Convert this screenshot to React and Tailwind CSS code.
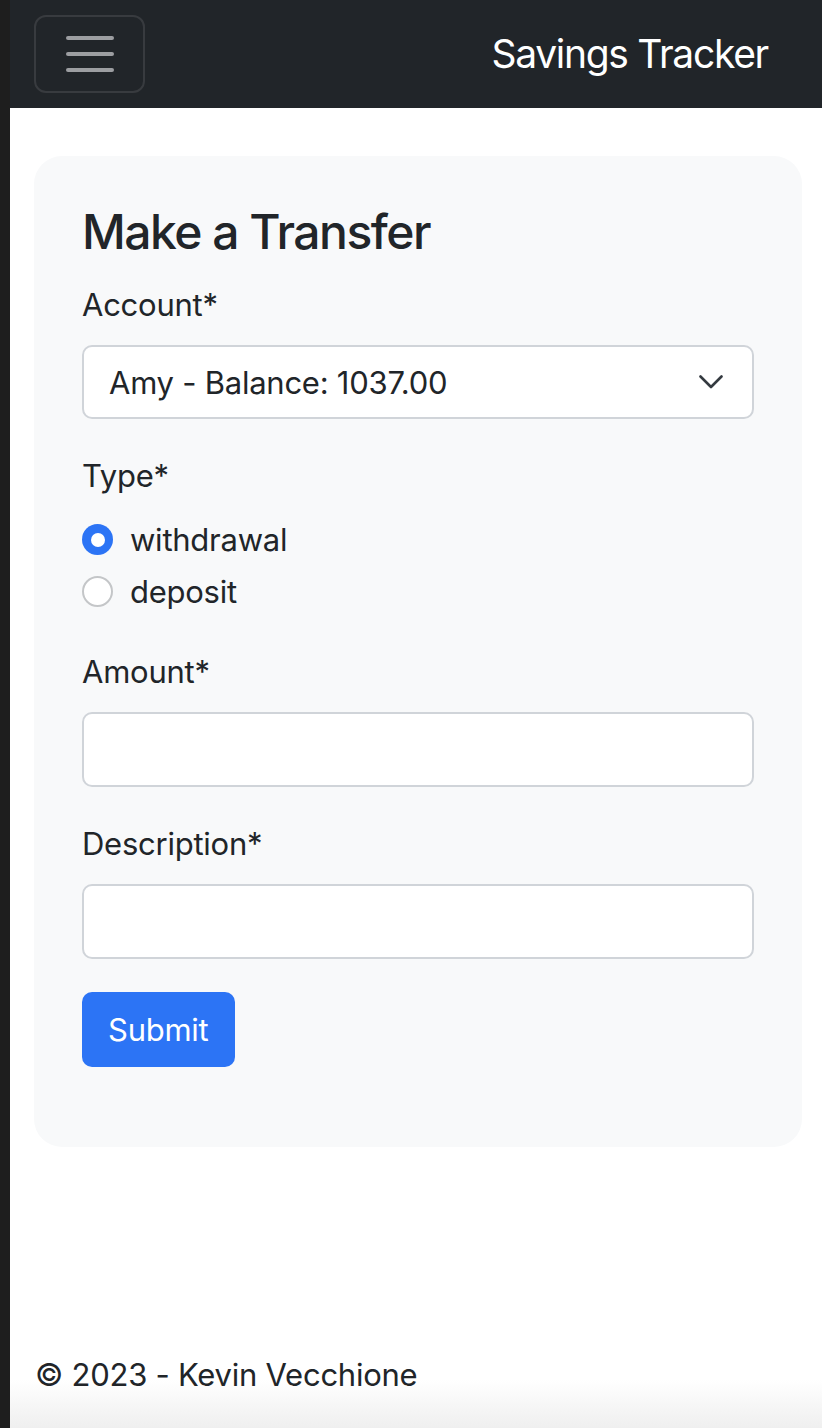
import React from "react";

function Radio({ checked, label }) {
  return (
    <div className="flex items-center h-[47px]">
      {checked ? (
        <span className="w-[31px] h-[31px] rounded-full bg-[#2c74f5] flex items-center justify-center shrink-0">
          <span className="w-[14px] h-[14px] rounded-full bg-white" />
        </span>
      ) : (
        <span className="w-[31px] h-[31px] rounded-full bg-white border-2 border-[#c4c6c8] shrink-0" />
      )}
      <span className="ml-[17px]">{label}</span>
    </div>
  );
}

export default function App() {
  return (
    <div className="flex min-h-[1428px] w-[822px] font-['Inter',sans-serif] text-[#212529] text-[31px] leading-[47px] tracking-[-0.25px]">
      <div className="w-[10px] shrink-0 bg-[#1e1e1e]" />
      <div className="flex-1 flex flex-col bg-white">
        <nav className="h-[108px] bg-[#212529] flex items-center justify-between pl-[24px] pr-[54px]">
          <button className="w-[111px] h-[78px] rounded-[12px] border-2 border-[#383b3f] flex items-center justify-center">
            <svg width="50" height="38" viewBox="0 0 50 38">
              <g stroke="#9c9ea1" strokeWidth="4" strokeLinecap="round">
                <line x1="3" y1="3" x2="47" y2="3" />
                <line x1="3" y1="19" x2="47" y2="19" />
                <line x1="3" y1="35" x2="47" y2="35" />
              </g>
            </svg>
          </button>
          <span className="text-white text-[39px] leading-[58px] tracking-[-1.3px]">Savings Tracker</span>
        </nav>

        <main className="ml-[24px] mr-[20px] mt-[48px]">
          <div className="bg-[#f8f9fa] rounded-[28px] px-[48px] pt-[47px] pb-[80px]">
            <h2 className="text-[48px] leading-[58px] font-medium tracking-[-1.5px] mb-[20px]">Make a Transfer</h2>

            <div className="mb-[33px]">
              <label className="block mb-[17px]">Account*</label>
              <div className="h-[74px] w-full bg-white border-2 border-[#d0d4d9] rounded-[10px] flex items-center justify-between pl-[25px] pr-[29px]">
                <span>Amy - Balance: 1037.00</span>
                <svg width="24" height="14" viewBox="0 0 24 14" fill="none">
                  <polyline points="1.5,1.5 12,12 22.5,1.5" stroke="#343a40" strokeWidth="2.6" strokeLinecap="round" strokeLinejoin="round" />
                </svg>
              </div>
            </div>

            <div className="mb-[33px]">
              <label className="block mb-[17px]">Type*</label>
              <div className="flex flex-col gap-[5px]">
                <Radio checked label="withdrawal" />
                <Radio label="deposit" />
              </div>
            </div>

            <div className="mb-[33px]">
              <label className="block mb-[17px]">Amount*</label>
              <div className="h-[75px] w-full bg-white border-2 border-[#d0d4d9] rounded-[10px]" />
            </div>

            <div className="mb-[33px]">
              <label className="block mb-[17px]">Description*</label>
              <div className="h-[75px] w-full bg-white border-2 border-[#d0d4d9] rounded-[10px]" />
            </div>

            <button className="h-[75px] px-[26px] bg-[#2c74f5] text-white rounded-[10px] leading-[47px]">Submit</button>
          </div>
        </main>

        <footer className="mt-auto h-[80px] pt-[3px] pl-[25px] bg-linear-to-b from-white from-40% to-[#efefef]">
          <span>© 2023 - Kevin Vecchione</span>
        </footer>
      </div>
    </div>
  );
}
